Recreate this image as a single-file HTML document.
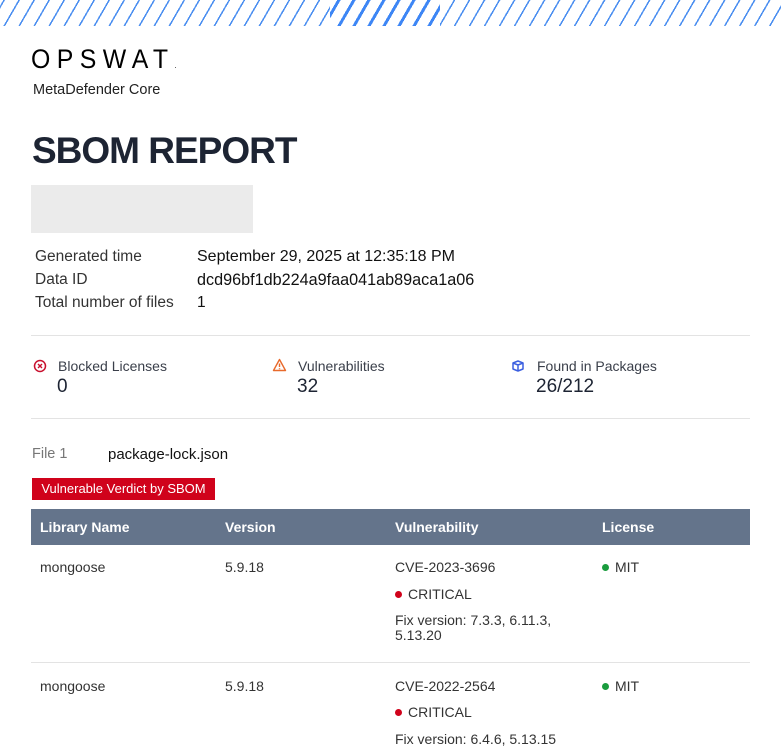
<!DOCTYPE html>
<html><head><meta charset="utf-8"><style>
body{margin:0;width:781px;height:754px;overflow:hidden;background:#fff;font-family:"Liberation Sans",sans-serif;color:#1d2433;position:relative}
.stripes{position:absolute;left:0;top:0;width:781px;height:26px;background:repeating-linear-gradient(-60deg,#fff 0 9px,#4a8ef0 9px 10.5px,#fff 10.5px 13px)}
.stripes2{position:absolute;left:330px;top:0;width:110px;height:26px;background:repeating-linear-gradient(-60deg,#fff 0 8px,#3d86f5 8px 11px,#fff 11px 13px)}
.abs{position:absolute;white-space:nowrap}
.logo{left:31px;top:44px;font-size:27px;letter-spacing:7px;font-weight:300;color:#000;transform:scaleX(0.92);transform-origin:left}
.sub{left:33px;top:82px;font-size:14.5px;color:#222}
h1{position:absolute;left:32px;top:130px;margin:0;font-size:37px;font-weight:bold;letter-spacing:-1px;color:#1d2433}
.grey{position:absolute;left:31px;top:185px;width:222px;height:48px;background:#ebebeb}
.lbl{font-size:15.5px;color:#333}
.val{font-size:15.5px;color:#111}
.hr{position:absolute;left:31px;width:719px;height:1px;background:#e3e3e3}
.sl{font-size:14px;color:#3a3f4a}
.sv{font-size:19px;color:#1d2433}
.th{position:absolute;left:31px;top:509px;width:719px;height:36px;background:#64748b}
.th span{position:absolute;top:10px;color:#fff;font-weight:bold;font-size:14px}
.td{font-size:14px;color:#333}
.dot{display:inline-block;width:7px;height:7px;border-radius:50%;margin-right:6px;vertical-align:1px}
</style></head><body>
<div class="stripes"></div><div class="stripes2"></div>
<div class="abs logo">OPSWAT<span style="font-size:8px;letter-spacing:0">.</span></div>
<div class="abs sub">MetaDefender Core</div>
<h1>SBOM REPORT</h1>
<div class="grey"></div>
<div class="abs lbl" style="left:35px;top:248px">Generated time</div>
<div class="abs val" style="left:197px;top:248px;font-size:16px">September 29, 2025 at 12:35:18 PM</div>
<div class="abs lbl" style="left:35px;top:271px">Data ID</div>
<div class="abs val" style="left:197px;top:271px;font-size:16.2px">dcd96bf1db224a9faa041ab89aca1a06</div>
<div class="abs lbl" style="left:35px;top:294px">Total number of files</div>
<div class="abs val" style="left:197px;top:294px">1</div>
<div class="hr" style="top:335px"></div>
<svg class="abs" style="left:33px;top:359px" width="14" height="14" viewBox="0 0 14 14"><circle cx="7" cy="7" r="5.5" fill="none" stroke="#c8102e" stroke-width="1.5"/><path d="M5 5l4 4M9 5l-4 4" stroke="#c8102e" stroke-width="1.4"/></svg>
<div class="abs sl" style="left:58px;top:358px">Blocked Licenses</div>
<div class="abs sv" style="left:57px;top:376px">0</div>
<svg class="abs" style="left:272px;top:358px" width="15" height="14" viewBox="0 0 15 14"><path d="M7.5 1.5L13.5 12.5H1.5Z" fill="none" stroke="#e86a2c" stroke-width="1.4" stroke-linejoin="round"/><path d="M7.5 5.5v3.5M7.5 10.3v1" stroke="#e86a2c" stroke-width="1.4"/></svg>
<div class="abs sl" style="left:298px;top:358px">Vulnerabilities</div>
<div class="abs sv" style="left:297px;top:376px">32</div>
<svg class="abs" style="left:511px;top:359px" width="14" height="14" viewBox="0 0 14 14"><path d="M2 4l5-2 5 2v6l-5 2-5-2z M2 4l5 2 5-2 M7 6v6" fill="none" stroke="#3b5fe0" stroke-width="1.5" stroke-linejoin="round"/></svg>
<div class="abs sl" style="left:537px;top:358px">Found in Packages</div>
<div class="abs sv" style="left:536px;top:376px">26/212</div>
<div class="hr" style="top:418px"></div>
<div class="abs" style="left:32px;top:446px;font-size:14.5px;color:#777">File 1</div>
<div class="abs" style="left:108px;top:446px;font-size:15px;color:#111">package-lock.json</div>
<div class="abs" style="left:32px;top:478px;width:183px;height:22px;background:#d0021b;color:#fff;font-size:13px;line-height:22px;text-align:center">Vulnerable Verdict by SBOM</div>
<div class="th"><span style="left:9px">Library Name</span><span style="left:194px">Version</span><span style="left:364px">Vulnerability</span><span style="left:571px">License</span></div>
<div class="abs td" style="left:40px;top:559px">mongoose</div>
<div class="abs td" style="left:225px;top:559px">5.9.18</div>
<div class="abs td" style="left:395px;top:559px">CVE-2023-3696</div>
<div class="abs td" style="left:395px;top:586px"><span class="dot" style="background:#d0021b"></span>CRITICAL</div>
<div class="abs td" style="left:395px;top:613px;line-height:15px">Fix version: 7.3.3, 6.11.3,<br>5.13.20</div>
<div class="abs td" style="left:602px;top:559px"><span class="dot" style="background:#1a9c3e"></span>MIT</div>
<div class="hr" style="top:662px"></div>
<div class="abs td" style="left:40px;top:678px">mongoose</div>
<div class="abs td" style="left:225px;top:678px">5.9.18</div>
<div class="abs td" style="left:395px;top:678px">CVE-2022-2564</div>
<div class="abs td" style="left:395px;top:704px"><span class="dot" style="background:#d0021b"></span>CRITICAL</div>
<div class="abs td" style="left:395px;top:731px">Fix version: 6.4.6, 5.13.15</div>
<div class="abs td" style="left:602px;top:678px"><span class="dot" style="background:#1a9c3e"></span>MIT</div>
</body></html>
